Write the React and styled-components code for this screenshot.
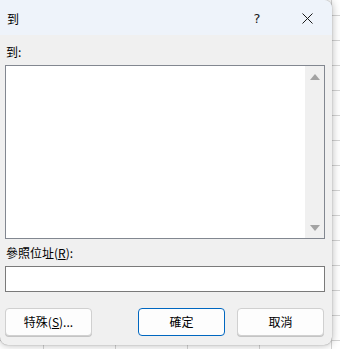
import React from "react";
import styled, { createGlobalStyle } from "styled-components";

const Global = createGlobalStyle`
  html, body { margin: 0; padding: 0; background: #ffffff; }
  body { font-family: "Noto Sans CJK TC", "Noto Sans", "Liberation Sans", sans-serif; }
  * { box-sizing: border-box; }
`;

const Sheet = styled.div`
  width: 340px;
  height: 349px;
  overflow: hidden;
  background-color: #ffffff;
  background-image:
    linear-gradient(to bottom, #d4d4d4 1px, transparent 1px),
    linear-gradient(to right, #d4d4d4 1px, transparent 1px);
  background-size: 72px 25px;
  background-position: 43px 15px;
`;

const Dialog = styled.div`
  width: 332px;
  height: 345px;
  background: #f0f0f0;
  border-radius: 0 8px 8px 8px;
  box-shadow: 0 0 9px rgba(0, 0, 0, 0.3), 0 0 1px rgba(0, 0, 0, 0.45);
  display: flex;
  flex-direction: column;
  overflow: hidden;
  color: #000;
  font-size: 12px;
`;

const TitleBar = styled.div`
  height: 35px;
  background: #eef3fa;
  display: flex;
  align-items: center;
  padding-left: 7px;
  flex: none;
`;

const Title = styled.div`
  flex: 1;
  font-size: 12px;
  line-height: 14px;
  padding-top: 2px;
`;

const TitleButton = styled.div`
  width: 50px;
  height: 35px;
  display: flex;
  align-items: center;
  justify-content: center;
  font-family: "DejaVu Sans", "Liberation Sans", sans-serif;
  font-size: 13px;
  color: #1a1a1a;
  padding-top: 1px;
`;

const Body = styled.div`
  flex: 1;
  display: flex;
  flex-direction: column;
  padding: 9px 8px 0 5px;
`;

const Label = styled.div`
  font-size: 12px;
  line-height: 16px;
  padding-left: 1px;
  margin-bottom: ${(p) => p.$mb}px;
  u { text-decoration: underline; text-underline-offset: 1px; }
`;

const ListBox = styled.div`
  width: 320px;
  height: 174px;
  border: 1px solid #828790;
  background: #ffffff;
  display: flex;
  justify-content: flex-end;
  margin-bottom: 6px;
`;

const ScrollBar = styled.div`
  width: 19px;
  background: #f0f0f0;
  display: flex;
  flex-direction: column;
  justify-content: space-between;
  align-items: center;
  padding: 8px 0 7px;
`;

const Arrow = styled.div`
  width: 0;
  height: 0;
  border-left: 5px solid transparent;
  border-right: 5px solid transparent;
  ${(p) =>
    p.$down
      ? "border-top: 6px solid #a3a3a3;"
      : "border-bottom: 6px solid #a3a3a3;"}
`;

const Input = styled.div`
  width: 320px;
  height: 26px;
  border: 1px solid #7a7a7a;
  background: #ffffff;
`;

const Buttons = styled.div`
  display: flex;
  margin-top: 16px;
`;

const Button = styled.div`
  width: ${(p) => p.$w}px;
  height: 28px;
  margin-left: ${(p) => p.$ml}px;
  border-radius: 4px;
  background: #fdfdfd;
  border: 1px solid ${(p) => (p.$primary ? "#0067c0" : "#d0d0d0")};
  box-shadow: ${(p) => (p.$primary ? "none" : "0 1px 0 #c4c4c4")};
  display: flex;
  align-items: center;
  justify-content: center;
  font-size: 12px;
  line-height: 14px;
  u { text-decoration: underline; text-underline-offset: 1px; }
`;

export default function App() {
  return (
    <>
      <Global />
      <Sheet>
        <Dialog>
          <TitleBar>
            <Title>到</Title>
            <TitleButton>?</TitleButton>
            <TitleButton>
              <svg width="11" height="11" viewBox="0 0 11 11">
                <path d="M0.5 0.5L10.5 10.5M10.5 0.5L0.5 10.5" stroke="#1a1a1a" strokeWidth="1" />
              </svg>
            </TitleButton>
          </TitleBar>
          <Body>
            <Label $mb={5}>到:</Label>
            <ListBox>
              <ScrollBar>
                <Arrow />
                <Arrow $down />
              </ScrollBar>
            </ListBox>
            <Label $mb={5}>
              參照位址(<u>R</u>):
            </Label>
            <Input />
            <Buttons>
              <Button $w={87} $ml={0}>
                特殊(<u>S</u>)...
              </Button>
              <Button $w={87} $ml={46} $primary>
                確定
              </Button>
              <Button $w={87} $ml={12}>
                取消
              </Button>
            </Buttons>
          </Body>
        </Dialog>
      </Sheet>
    </>
  );
}
